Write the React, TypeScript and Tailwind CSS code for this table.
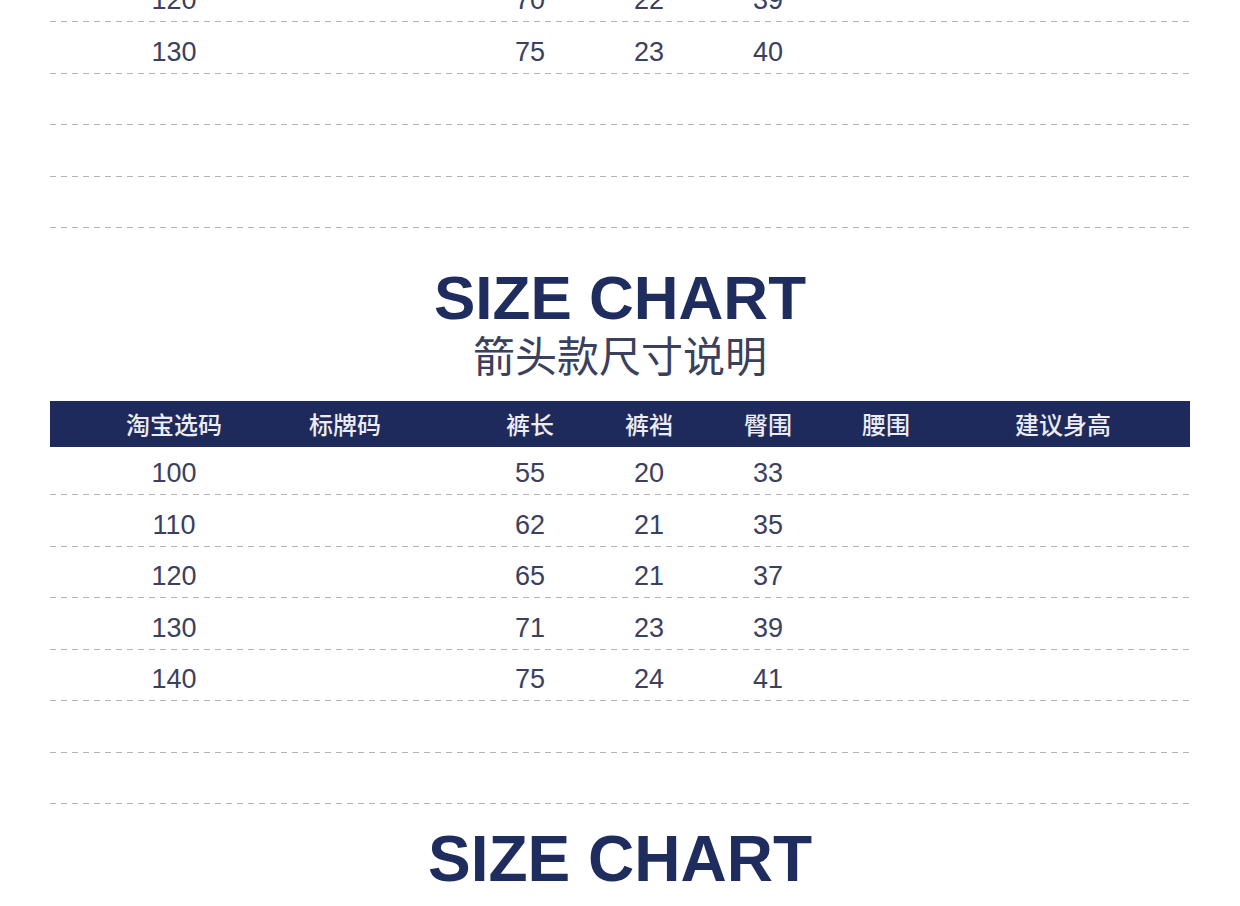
const cols =
  'grid grid-cols-[248px_94px_78px_120px_118px_120px_116px_238px] items-center';

const headers = ['淘宝选码', '标牌码', '', '裤长', '裤裆', '臀围', '腰围', '建议身高'];

const topRows = [
  ['120', '70', '22', '39'],
  ['130', '75', '23', '40'],
  null,
  null,
  null,
];

const arrowRows = [
  ['100', '55', '20', '33'],
  ['110', '62', '21', '35'],
  ['120', '65', '21', '37'],
  ['130', '71', '23', '39'],
  ['140', '75', '24', '41'],
  null,
  null,
];

function Dashes() {
  return (
    <div className="h-px w-full bg-[repeating-linear-gradient(to_right,#b3b3b3_0px,#b3b3b3_6px,transparent_6px,transparent_11px)]" />
  );
}

function Row({ cells, first }: { cells: string[] | null; first?: boolean }) {
  return (
    <div className={first ? 'flex h-[48px] flex-col' : 'flex h-[51.5px] flex-col'}>
      <div className={first ? `${cols} flex-1 pt-[6px]` : `${cols} flex-1 pt-[10px]`}>
        {cells && (
          <>
            <span className="text-center">{cells[0]}</span>
            <span />
            <span />
            <span className="text-center">{cells[1]}</span>
            <span className="text-center">{cells[2]}</span>
            <span className="text-center">{cells[3]}</span>
          </>
        )}
      </div>
      <Dashes />
    </div>
  );
}

function Title({ mt, size, subMt }: { mt: string; size: string; subMt: string }) {
  return (
    <div className={`flex flex-col items-center ${mt}`}>
      <h2
        className={`${size} font-bold leading-none text-[#1f2c5e]`}
        style={{ fontFamily: '"Liberation Sans", Arial, sans-serif' }}
      >
        SIZE CHART
      </h2>
      <p
        className={`${subMt} text-[42px] leading-[42px] text-[#3b405c]`}
        style={{ fontFamily: '"Noto Sans CJK SC", sans-serif' }}
      >
        箭头款尺寸说明
      </p>
    </div>
  );
}

export default function App() {
  return (
    <div className="h-[906px] w-[1240px] overflow-hidden bg-white">
      <div
        className="mx-[50px] -mt-[29.5px] text-[27px] leading-none text-[#3b405e]"
        style={{ fontFamily: '"Liberation Sans", Arial, "Noto Sans CJK SC", sans-serif' }}
      >
        {topRows.map((r, i) => (
          <Row key={i} cells={r} />
        ))}

        <Title mt="mt-[39px]" size="text-[62px]" subMt="mt-[4px]" />

        <div className={`${cols} mt-[26px] h-[46px] bg-[#1e2a5c]`}>
          {headers.map((h, i) => (
            <span
              key={i}
              className="text-center text-[24px] font-medium text-[#ececf2]"
              style={{ fontFamily: '"Noto Sans CJK SC", sans-serif' }}
            >
              {h}
            </span>
          ))}
        </div>

        {arrowRows.map((r, i) => (
          <Row key={i} cells={r} first={i === 0} />
        ))}

        <Title mt="mt-[23px]" size="text-[64px]" subMt="mt-[16px]" />
      </div>
    </div>
  );
}
